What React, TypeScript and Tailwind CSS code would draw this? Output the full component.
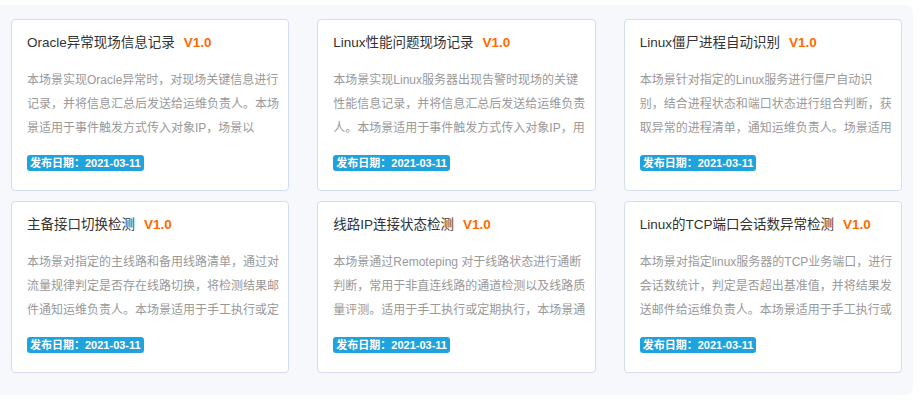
import React from 'react';

interface Scene {
  title: string;
  version: string;
  lines: string[];
  date: string;
}

const scenes: Scene[] = [
  {
    title: 'Oracle异常现场信息记录',
    version: 'V1.0',
    lines: [
      '本场景实现Oracle异常时，对现场关键信息进行',
      '记录，并将信息汇总后发送给运维负责人。本场',
      '景适用于事件触发方式传入对象IP，场景以',
    ],
    date: '2021-03-11',
  },
  {
    title: 'Linux性能问题现场记录',
    version: 'V1.0',
    lines: [
      '本场景实现Linux服务器出现告警时现场的关键',
      '性能信息记录，并将信息汇总后发送给运维负责',
      '人。本场景适用于事件触发方式传入对象IP，用',
    ],
    date: '2021-03-11',
  },
  {
    title: 'Linux僵尸进程自动识别',
    version: 'V1.0',
    lines: [
      '本场景针对指定的Linux服务进行僵尸自动识',
      '别，结合进程状态和端口状态进行组合判断，获',
      '取异常的进程清单，通知运维负责人。场景适用',
    ],
    date: '2021-03-11',
  },
  {
    title: '主备接口切换检测',
    version: 'V1.0',
    lines: [
      '本场景对指定的主线路和备用线路清单，通过对',
      '流量规律判定是否存在线路切换，将检测结果邮',
      '件通知运维负责人。本场景适用于手工执行或定',
    ],
    date: '2021-03-11',
  },
  {
    title: '线路IP连接状态检测',
    version: 'V1.0',
    lines: [
      '本场景通过Remoteping 对于线路状态进行通断',
      '判断，常用于非直连线路的通道检测以及线路质',
      '量评测。适用于手工执行或定期执行，本场景通',
    ],
    date: '2021-03-11',
  },
  {
    title: 'Linux的TCP端口会话数异常检测',
    version: 'V1.0',
    lines: [
      '本场景对指定linux服务器的TCP业务端口，进行',
      '会话数统计，判定是否超出基准值，并将结果发',
      '送邮件给运维负责人。本场景适用于手工执行或',
    ],
    date: '2021-03-11',
  },
];

const SceneCard = ({ scene }: { scene: Scene }) => (
  <div className="h-[172px] bg-white border border-[#d3ddef] rounded-[4px] pt-[14px] pl-[15px] pr-[8px] flex flex-col">
    {/* 标题 + 版本 */}
    <div className="flex items-center h-[18px] whitespace-nowrap">
      <span className="text-[13.5px] text-[#333]">{scene.title}</span>
      <span className="ml-[9px] text-[13.5px] font-bold text-[#ff6a00] font-['Liberation_Sans',sans-serif]">
        {scene.version}
      </span>
    </div>

    {/* 描述 */}
    <div className="mt-[16px] text-[12px] leading-[24px] text-[#999]">
      {scene.lines.map((line) => (
        <p key={line} className="whitespace-nowrap">{line}</p>
      ))}
    </div>

    <div className="mt-[15px] flex">
      <span className="flex items-center h-[16px] px-[3px] rounded-[3px] bg-[#1fa3dc] text-white text-[11px] font-bold leading-none whitespace-nowrap">
        发布日期：{scene.date}
      </span>
    </div>
  </div>
);

export default function App() {
  return (
    <div className="w-[920px] h-[400px] bg-white pt-[5px] pr-[7px] font-['Liberation_Sans','Noto_Sans_CJK_SC',sans-serif]">
      <div className="h-[390px] bg-[#f6f8fb] rounded-r-[8px] pt-[14px] px-[11px]">
        <div className="grid grid-cols-3 gap-x-[28px] gap-y-[10px]">
          {scenes.map((s) => (
            <SceneCard key={s.title} scene={s} />
          ))}
        </div>
      </div>
    </div>
  );
}
